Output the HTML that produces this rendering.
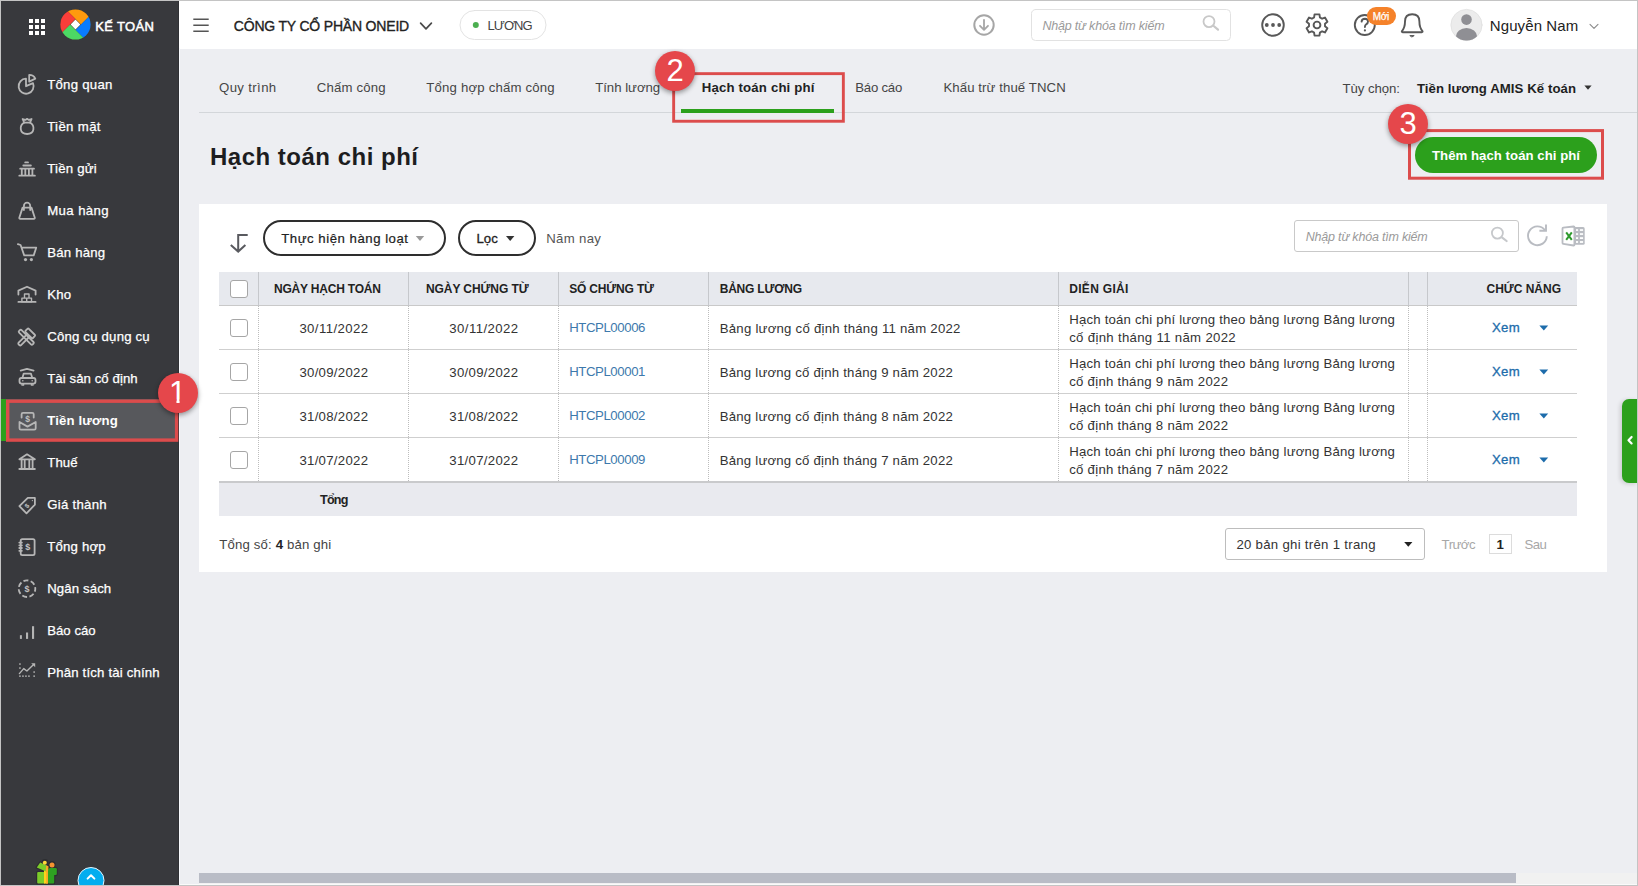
<!DOCTYPE html>
<html lang="vi">
<head>
<meta charset="utf-8">
<title>Hạch toán chi phí</title>
<style>
*{box-sizing:border-box;margin:0;padding:0}
html,body{width:1638px;height:886px;overflow:hidden}
body{position:relative;background:#edeef2;font-family:"Liberation Sans",sans-serif;font-size:13px;color:#212121}
.abs{position:absolute}
.t{position:absolute;white-space:nowrap;line-height:20px;height:20px}
#frame{position:absolute;left:0;top:0;width:1638px;height:886px;border:1px solid #c4c4c4;z-index:50;pointer-events:none}
#side{position:absolute;left:1px;top:1px;width:178px;height:884px;background:#38393d}
#top{position:absolute;left:179px;top:1px;width:1458px;height:47.5px;background:#fff}
.badge{position:absolute;width:40px;height:40px;border-radius:50%;background:#e5474b;color:#fff;font-size:31px;line-height:39px;text-align:center;box-shadow:0 2px 5px rgba(0,0,0,.4);z-index:20}
.rbox{position:absolute;border:2px solid #e04a4a;z-index:19}
#card{position:absolute;left:199px;top:204px;width:1408px;height:368px;background:#fff}
.pill{position:absolute;border:2px solid #2e2e2e;border-radius:18px;background:#fff}
.th{position:absolute;top:272px;height:34px;background:#e7e9ee;border-right:1px solid #c8c8c8;border-bottom:1px solid #c8c8c8}
.hl{position:absolute;left:219px;width:1358px;height:1px;background:#cfcfcf}
.vl{position:absolute;top:306px;width:0;height:175px;border-left:1px dotted #bdbdbd}
.cb{position:absolute;left:230px;width:18px;height:18px;border:1px solid #a6a6a6;border-radius:3px;background:#fff}
svg{overflow:visible}
</style>
</head>
<body>
<div id="side"></div>
<div class="abs" style="left:1px;top:399px;width:178px;height:42px;background:#57585c"></div>
<div class="abs" style="left:1px;top:399px;width:5px;height:42px;background:#2ca01c"></div>
<svg class="abs" style="left:0;top:0" width="180" height="50"><rect x="29" y="19" width="4" height="4" fill="#fff"/><rect x="35" y="19" width="4" height="4" fill="#fff"/><rect x="41" y="19" width="4" height="4" fill="#fff"/><rect x="29" y="25" width="4" height="4" fill="#fff"/><rect x="35" y="25" width="4" height="4" fill="#fff"/><rect x="41" y="25" width="4" height="4" fill="#fff"/><rect x="29" y="31" width="4" height="4" fill="#fff"/><rect x="35" y="31" width="4" height="4" fill="#fff"/><rect x="41" y="31" width="4" height="4" fill="#fff"/></svg>
<svg class="abs" style="left:59.8px;top:9.4px" width="31" height="31" viewBox="-15.5 -15.5 31 31">
<defs><clipPath id="lc"><circle r="15.1"/></clipPath></defs>
<g clip-path="url(#lc)">
<rect x="-16" y="-16" width="32" height="32" fill="#4a3a22"/>
<polygon points="5.5,0 -24.5,-30 35.5,-30" fill="#ff9a0e"/>
<polygon points="0,5.5 30,-24.5 30,35.5" fill="#0a7cff"/>
<polygon points="-5.5,0 24.5,30 -35.5,30" fill="#4cd964"/>
<polygon points="0,-5.5 -30,24.5 -30,-35.5" fill="#fa3e3a"/>
<polygon points="0,-4.9 4.9,0 0,4.9 -4.9,0" fill="#fff"/>
</g></svg>
<div class="t" style="left:95.3px;top:17px;font-size:13px;color:#fff;-webkit-text-stroke:0.5px #fff;letter-spacing:0.348px;">KẾ TOÁN</div>
<div class="t" style="left:47.2px;top:75px;font-size:13.2px;color:#fff;-webkit-text-stroke:0.25px #fff;letter-spacing:0.267px;">Tổng quan</div>
<div class="t" style="left:47.2px;top:117px;font-size:13.2px;color:#fff;-webkit-text-stroke:0.25px #fff;letter-spacing:0.355px;">Tiền mặt</div>
<div class="t" style="left:47.2px;top:159px;font-size:13.2px;color:#fff;-webkit-text-stroke:0.25px #fff;letter-spacing:0.225px;">Tiền gửi</div>
<div class="t" style="left:47.2px;top:201px;font-size:13.2px;color:#fff;-webkit-text-stroke:0.25px #fff;letter-spacing:0.406px;">Mua hàng</div>
<div class="t" style="left:47.2px;top:243px;font-size:13.2px;color:#fff;-webkit-text-stroke:0.25px #fff;letter-spacing:0.219px;">Bán hàng</div>
<div class="t" style="left:47.2px;top:285px;font-size:13.2px;color:#fff;-webkit-text-stroke:0.25px #fff;letter-spacing:0.266px;">Kho</div>
<div class="t" style="left:47.2px;top:327px;font-size:13.2px;color:#fff;-webkit-text-stroke:0.25px #fff;letter-spacing:0.199px;">Công cụ dụng cụ</div>
<div class="t" style="left:47.2px;top:369px;font-size:13.2px;color:#fff;-webkit-text-stroke:0.25px #fff;letter-spacing:0.076px;">Tài sản cố định</div>
<div class="t" style="left:47.2px;top:411px;font-size:13.2px;color:#fff;font-weight:bold;letter-spacing:0.141px;">Tiền lương</div>
<div class="t" style="left:47.2px;top:453px;font-size:13.2px;color:#fff;-webkit-text-stroke:0.25px #fff;letter-spacing:0.146px;">Thuế</div>
<div class="t" style="left:47.2px;top:495px;font-size:13.2px;color:#fff;-webkit-text-stroke:0.25px #fff;letter-spacing:0.289px;">Giá thành</div>
<div class="t" style="left:47.2px;top:537px;font-size:13.2px;color:#fff;-webkit-text-stroke:0.25px #fff;letter-spacing:0.208px;">Tổng hợp</div>
<div class="t" style="left:47.2px;top:579px;font-size:13.2px;color:#fff;-webkit-text-stroke:0.25px #fff;letter-spacing:0.119px;">Ngân sách</div>
<div class="t" style="left:47.2px;top:621px;font-size:13.2px;color:#fff;-webkit-text-stroke:0.25px #fff;letter-spacing:0.016px;">Báo cáo</div>
<div class="t" style="left:47.2px;top:663px;font-size:13.2px;color:#fff;-webkit-text-stroke:0.25px #fff;letter-spacing:0.181px;">Phân tích tài chính</div>
<svg class="abs" style="left:0;top:0" width="180" height="886" fill="none" stroke="#b6b6b6" stroke-width="1.8" stroke-linecap="round" stroke-linejoin="round">
<!-- 1 pie -->
<path d="M26 78.7 A7.5 7.5 0 1 0 33 83.2 L26 86.2 Z"/>
<path d="M29.2 81.6 V74.9 A6.8 6.8 0 0 1 35.3 78.6 Z"/>
<!-- 2 money bag -->
<path d="M24.2 122.6 C19.2 125.6 19.2 134 27.1 134 C35 134 35 125.6 30 122.6 Z"/>
<path d="M24.2 122.6 L22.6 119 L25.4 119.9 L27.1 118.8 L28.8 119.9 L31.6 119 L30 122.6"/>
<!-- 3 bank -->
<path d="M25.2 162.4 H28 M23.3 165.5 H30.9 M20.2 168.7 H34 M19.3 175.7 H34.9 M21.8 169 V175.3 M25.3 169 V175.3 M28.9 169 V175.3 M32.4 169 V175.3"/>
<!-- 4 bag -->
<path d="M22.6 207.6 H31.5 L34.8 217.8 Q35 218.8 34 218.8 H20.1 Q19.1 218.8 19.3 217.8 Z"/>
<path d="M23.9 210 V206 A3.15 3.3 0 0 1 30.2 206 V210"/>
<!-- 5 cart -->
<path d="M17.9 244.1 L20.6 245 L24.2 255.4 H33.7 L36.2 247.7 H21.7"/>
<circle cx="25.5" cy="259.6" r="1.6" fill="#b6b6b6" stroke="none"/><circle cx="31.4" cy="259.6" r="1.6" fill="#b6b6b6" stroke="none"/>
<!-- 6 warehouse -->
<path d="M18.4 294.6 V290.6 L27 286.7 L35.6 290.6 V294.6 M18.4 301.9 H35.6"/>
<path d="M24.5 294 H29 V298.1 H24.5 Z M21.9 298.1 H26.7 V301.9 H21.9 Z M26.7 298.1 H31.5 V301.9 H26.7 Z" stroke-width="1.4"/>
<!-- 7 tools -->
<rect x="-1.75" y="-9.6" width="3.5" height="19.2" rx="1.2" transform="translate(26.3 337.3) rotate(-45)"/>
<rect x="-1.75" y="-6.2" width="3.5" height="12.4" rx="1.2" transform="translate(23.4 340.3) rotate(45)"/>
<rect x="-2.3" y="-5.2" width="4.6" height="10.4" rx="1" transform="translate(30.2 333.4) rotate(-45)"/>
<!-- 8 car -->
<path d="M20.7 370.6 L27 368.8 L33.6 370.6"/>
<path d="M22.4 378 L23.7 373.6 H30.9 L32.3 378"/>
<rect x="19.5" y="378" width="16" height="5.6" rx="2"/>
<path d="M22 383.8 V385.2 H23.6 V383.8 M31.4 383.8 V385.2 H33 V383.8" stroke-width="1.3"/>
<circle cx="22.8" cy="380.8" r=".8" fill="#b4b4b4" stroke="none"/><circle cx="32.2" cy="380.8" r=".8" fill="#b4b4b4" stroke="none"/>
<!-- 9 salary -->
<path d="M19.5 422 L27.5 426.6 L35.7 422 V428.2 Q35.7 429.6 34.3 429.6 H20.9 Q19.5 429.6 19.5 428.2 Z"/>
<path d="M21.6 417.6 V414.2 Q21.6 412.8 23 412.8 H32.3 Q33.7 412.8 33.7 414.2 V417.6"/>
<text x="27.6" y="422.3" font-family="Liberation Sans, sans-serif" font-size="8.5" text-anchor="middle" font-weight="bold" fill="#c2c2c2" stroke="none">$</text>
<!-- 10 tax bank -->
<path d="M19.4 459.3 L27 454.3 L34.9 459.3 Z M19.3 469 H34.9 M21.6 460 V468.3 M24.7 460 V468.3 M29.3 460 V468.3 M32.6 460 V468.3"/>
<!-- 11 tag -->
<path d="M19.4 506.1 L27.8 497.9 H34.9 V504.7 L26.5 513.3 Z"/>
<circle cx="32.4" cy="500.6" r=".7" fill="#b4b4b4" stroke="none"/>
<text x="0" y="2.4" transform="translate(26.8 505.8) rotate(-45)" font-family="Liberation Sans, sans-serif" font-size="6.5" text-anchor="middle" font-weight="bold" fill="#c2c2c2" stroke="none">$</text>
<!-- 12 notebook -->
<rect x="20.7" y="539.1" width="13.9" height="16.1" rx="1.6"/>
<path d="M19.3 542.6 H21.9 M19.3 545.3 H21.9 M19.3 548 H21.9 M19.3 550.8 H21.9"/>
<text x="27.7" y="550.4" font-family="Liberation Sans, sans-serif" font-size="9" text-anchor="middle" font-weight="bold" fill="#c2c2c2" stroke="none">$</text>
<!-- 13 budget -->
<circle cx="27" cy="588.7" r="8.3" stroke-dasharray="5 2.45" stroke-dashoffset="2" stroke-linecap="butt"/>
<text x="27" y="592" font-family="Liberation Sans, sans-serif" font-size="9" text-anchor="middle" font-weight="bold" fill="#c2c2c2" stroke="none">$</text>
<!-- 14 bars -->
<g fill="#b4b4b4" stroke="none"><rect x="19.9" y="635.2" width="2" height="3.7"/><rect x="26" y="632.5" width="2.1" height="6.4"/><rect x="32" y="626.2" width="2.1" height="12.7"/></g>
<!-- 15 trend -->
<g fill="#b4b4b4" stroke="none">
<rect x="19.2" y="663.3" width="1.5" height="1.5"/><rect x="19.2" y="667.3" width="1.5" height="1.5"/>
<rect x="19.2" y="675.4" width="1.5" height="1.5"/><rect x="22.2" y="675.4" width="1.5" height="1.5"/><rect x="25.2" y="675.4" width="1.5" height="1.5"/><rect x="28.2" y="675.4" width="1.5" height="1.5"/><rect x="33.4" y="675.4" width="1.5" height="1.5"/>
<rect x="33.4" y="671.3" width="1.5" height="1.5"/>
<polygon points="31.2,663.2 35.2,663.2 35.2,667.2"/>
</g>
<path d="M19.4 673.6 L23.7 668.6 L26.9 671 L33.6 664.6" stroke-width="1.4"/>
</svg>

<svg class="abs" style="left:0;top:850px" width="180" height="36" viewBox="0 850 180 36">
<g stroke="#2d2e31" stroke-width="2.4" stroke-linejoin="round" fill="#2d2e31">
<rect x="37.2" y="872" width="16.8" height="11.4" rx="1"/>
<polygon points="36.8,867.5 40.2,862.6 50.6,867.2 47.6,872.4"/>
<rect x="49" y="868" width="7.6" height="7" rx="1"/>
<circle cx="45" cy="862.4" r="2.1"/><circle cx="52" cy="864.8" r="2.5"/>
</g>
<rect x="37.2" y="872" width="8" height="11.6" rx="1" fill="#7bcc2a"/>
<rect x="44" y="866" width="3.6" height="17.6" fill="#ffd31a"/>
<rect x="46.2" y="866" width="1.8" height="17.6" fill="#f9a825"/>
<rect x="48" y="868.5" width="6.2" height="15.1" rx="1" fill="#2ea121"/>
<rect x="49" y="868" width="7.8" height="7" rx="1.2" fill="#2ea121"/>
<polygon points="36.8,867.5 40.2,862.6 47.6,865.9 46.6,871.8" fill="#7bcc2a"/>
<polygon points="46.2,865.3 48.6,866.4 47.8,872.4 45.6,871.4" fill="#f9a825"/>
<circle cx="44.8" cy="862.8" r="2" fill="#ffd83a"/>
<circle cx="52" cy="865" r="2.5" fill="#f59331"/>
<circle cx="91" cy="880.5" r="13" fill="#03adef" stroke="#e6f7ff" stroke-width="1"/>
<path d="M87.6 878.6 L91 875.2 L94.4 878.6" fill="none" stroke="#fff" stroke-width="2" stroke-linecap="round" stroke-linejoin="round"/>
</svg>
<div id="top"></div>
<div class="abs" style="left:179px;top:48px;width:1px;height:837px;background:#f8f9fd"></div>
<div class="abs" style="left:178px;top:1px;width:1px;height:884px;background:#303135"></div>
<svg class="abs" style="left:0;top:0" width="1638" height="50" fill="none" stroke-linecap="round" stroke-linejoin="round">
<path d="M193.3 19.3 H208.7 M193.3 25.3 H208.7 M193.3 31.3 H208.7" stroke="#555" stroke-width="1.6" stroke-linecap="butt"/>
<path d="M420.6 23.2 L426 28.8 L431.4 23.2" stroke="#4a4a4a" stroke-width="1.7"/>
<rect x="460" y="10.5" width="86" height="29" rx="14.5" fill="#fff" stroke="#e3e3e3" stroke-width="1"/>
<circle cx="475.8" cy="25" r="3" fill="#4caf50"/>
<!-- download -->
<circle cx="984" cy="25" r="9.7" stroke="#a6a6a6" stroke-width="2"/>
<path d="M984 19.8 V29.4 M980 25.8 L984 29.8 L988 25.8" stroke="#a6a6a6" stroke-width="1.8"/>
<!-- search -->
<rect x="1031.5" y="9.5" width="199" height="31" rx="4" fill="#fff" stroke="#e2e2e2"/>
<circle cx="1209" cy="21.6" r="5.5" stroke="#c8c8c8" stroke-width="1.8"/>
<path d="M1213.7 26 L1218 29.7" stroke="#c8c8c8" stroke-width="2.2"/>
<!-- ellipsis -->
<circle cx="1273" cy="25" r="10.8" stroke="#585858" stroke-width="1.9"/>
<circle cx="1266.8" cy="25" r="1.9" fill="#585858"/><circle cx="1273" cy="25" r="1.9" fill="#585858"/><circle cx="1279.2" cy="25" r="1.9" fill="#585858"/>
<!-- gear -->
<g transform="translate(1317 25)" stroke="#585858" stroke-width="1.9">
<path d="M2.90 -7.56 L2.45 -10.62 L-2.45 -10.62 L-2.90 -7.56 L-5.10 -6.29 L-7.97 -7.43 L-10.42 -3.19 L-8.00 -1.27 L-8.00 1.27 L-10.42 3.19 L-7.97 7.43 L-5.10 6.29 L-2.90 7.56 L-2.45 10.62 L2.45 10.62 L2.90 7.56 L5.10 6.29 L7.97 7.43 L10.42 3.19 L8.00 1.27 L8.00 -1.27 L10.42 -3.19 L7.97 -7.43 L5.10 -6.29 Z"/>
<circle r="3.4"/>
</g>
<!-- help -->
<circle cx="1364.8" cy="25" r="10" stroke="#585858" stroke-width="1.9"/>
<path d="M1361.6 21.6 Q1361.8 18.8 1364.9 18.8 Q1368 18.9 1368 21.5 Q1368 23.3 1366.2 24.3 Q1364.9 25.1 1364.9 27" stroke="#585858" stroke-width="1.9"/>
<circle cx="1364.9" cy="30.4" r="1.1" fill="#5a5a5a"/>
<rect x="1367" y="7" width="29" height="18" rx="9" fill="#f5822a"/>
<!-- bell -->
<path d="M1402.6 32.2 Q1401.4 32.2 1402 31 Q1405 27.5 1405 21.5 Q1405 14.3 1412.2 14.3 Q1419.4 14.3 1419.4 21.5 Q1419.4 27.5 1422.4 31 Q1423 32.2 1421.8 32.2 Z" stroke="#585858" stroke-width="1.9"/>
<path d="M1410.2 35.6 H1414.2 L1412.2 36.8 Z" fill="#5a5a5a" stroke="#5a5a5a" stroke-width="1"/>
<!-- avatar -->
<circle cx="1466.5" cy="25" r="15.6" fill="#ececec" stroke="#e0e0e0" stroke-width=".8"/>
<clipPath id="avc"><circle cx="1466.5" cy="25" r="15.4"/></clipPath>
<g clip-path="url(#avc)" fill="#8f8f94"><circle cx="1466.5" cy="19.6" r="5.3"/><ellipse cx="1466.5" cy="36.5" rx="10.6" ry="8.6"/></g>
<path d="M1590 24.4 L1594 28.4 L1598 24.4" stroke="#8a8a8a" stroke-width="1.1"/>
</svg>
<div class="t" style="left:233.8px;top:16px;font-size:14px;color:#222;-webkit-text-stroke:0.35px #222;letter-spacing:-0.189px;">CÔNG TY CỔ PHẦN ONEID</div>
<div class="t" style="left:487.4px;top:16px;font-size:13px;color:#444;letter-spacing:-0.921px;">LƯƠNG</div>
<div class="t" style="left:1042.4px;top:16px;font-size:12.5px;color:#9a9a9a;font-style:italic;letter-spacing:-0.192px;">Nhập từ khóa tìm kiếm</div>
<div class="t" style="left:1372.8px;top:7px;font-size:10px;color:#fff;-webkit-text-stroke:0.25px #fff;letter-spacing:-0.355px;">Mới</div>
<div class="t" style="left:1489.8px;top:16px;font-size:15px;color:#222;letter-spacing:0.095px;">Nguyễn Nam</div>
<div class="abs" style="left:199px;top:112px;width:1438px;height:1px;background:#d3d6da"></div>
<div class="abs" style="left:681px;top:109px;width:153px;height:4px;background:#2ca01c"></div>
<div class="t" style="left:219px;top:78px;font-size:13.2px;color:#454545;letter-spacing:0.369px;">Quy trình</div>
<div class="t" style="left:316.8px;top:78px;font-size:13.2px;color:#454545;letter-spacing:0.181px;">Chấm công</div>
<div class="t" style="left:426.3px;top:78px;font-size:13.2px;color:#454545;letter-spacing:0.181px;">Tổng hợp chấm công</div>
<div class="t" style="left:595.2px;top:78px;font-size:13.2px;color:#454545;letter-spacing:-0.016px;">Tính lương</div>
<div class="t" style="left:855.2px;top:78px;font-size:13.2px;color:#454545;letter-spacing:-0.218px;">Báo cáo</div>
<div class="t" style="left:943.4px;top:78px;font-size:13.2px;color:#454545;letter-spacing:0.092px;">Khấu trừ thuế TNCN</div>
<div class="t" style="left:701.8px;top:78px;font-size:13.2px;color:#222;font-weight:bold;letter-spacing:0.168px;">Hạch toán chi phí</div>
<div class="t" style="left:1342.5px;top:79px;font-size:13.2px;color:#444;letter-spacing:-0.065px;">Tùy chọn:</div>
<div class="t" style="left:1416.9px;top:79px;font-size:13.2px;color:#1f1f1f;font-weight:bold;letter-spacing:0.077px;">Tiền lương AMIS Kế toán</div>
<svg class="abs" style="left:1584px;top:85px" width="9" height="6"><polygon points="0.4,0.5 7.6,0.5 4,4.8" fill="#333"/></svg>
<div class="t" style="left:210px;top:147px;font-size:24px;color:#1d1d1f;font-weight:bold;letter-spacing:0.499px;">Hạch toán chi phí</div>
<div class="abs" style="left:1415px;top:137px;width:182px;height:36px;border-radius:18px;background:#2ca01c"></div>
<div class="t" style="left:1432px;top:146px;font-size:13.2px;color:#fff;font-weight:bold;letter-spacing:0.034px;">Thêm hạch toán chi phí</div>
<div id="card"></div>
<div class="pill" style="left:263px;top:220px;width:183px;height:36px"></div>
<div class="pill" style="left:458px;top:220px;width:78px;height:36px"></div>
<div class="abs" style="left:1294px;top:220px;width:225px;height:32px;border:1px solid #c9c9c9;border-radius:3px;background:transparent"></div>
<svg class="abs" style="left:0;top:200px" width="1638" height="70" viewBox="0 200 1638 70" fill="none" stroke-linecap="round" stroke-linejoin="round">
<path d="M238.2 251 V235 H247.7 M230.8 245 L238.2 251.6 L245.4 245" stroke="#595a5f" stroke-width="2" stroke-linecap="butt" stroke-linejoin="miter"/>
<polygon points="415.8,236 424.2,236 420,241" fill="#9a9a9a"/>
<polygon points="506,236 514.4,236 510.2,241" fill="#333"/>
<circle cx="1497.4" cy="233.1" r="5.5" stroke="#c6c8cb" stroke-width="1.8"/>
<path d="M1502.2 237.6 L1506.6 241" stroke="#c6c8cb" stroke-width="2.2"/>
<path d="M1544.8 230 A9.4 9.4 0 1 0 1546.8 236.3" stroke="#b9bcc2" stroke-width="1.9" stroke-linecap="butt"/>
<path d="M1546 224.6 V230.8 H1539.4" stroke="#b9bcc2" stroke-width="1.9" stroke-linecap="butt" stroke-linejoin="miter"/>
<!-- excel -->
<rect x="1573.6" y="227.1" width="11.1" height="17.7" rx="1.6" fill="#b9bcc2"/>
<rect x="1576" y="229.2" width="2.1" height="1.7" fill="#fff"/><rect x="1579.9" y="229.2" width="3.2" height="1.7" fill="#fff"/><rect x="1576" y="233.2" width="2.1" height="1.7" fill="#fff"/><rect x="1579.9" y="233.2" width="3.2" height="1.7" fill="#fff"/><rect x="1576" y="237.2" width="2.1" height="1.8" fill="#fff"/><rect x="1579.9" y="237.2" width="3.2" height="1.8" fill="#fff"/><rect x="1576" y="241.1" width="2.1" height="1.8" fill="#fff"/><rect x="1579.9" y="241.1" width="3.2" height="1.8" fill="#fff"/>
<path d="M1563.3 227.6 L1573.6 226.5 Q1574.4 226.4 1574.4 227.3 V244.7 Q1574.4 245.6 1573.6 245.5 L1563.3 243.8 Q1562.5 243.7 1562.5 242.9 V228.5 Q1562.5 227.7 1563.3 227.6 Z" fill="#fff" stroke="#b9bcc2" stroke-width="1.8"/>
<path d="M1566.2 232.4 L1571.8 239.8 M1571.8 232.4 L1566.2 239.8" stroke="#2e9a2e" stroke-width="2" stroke-linecap="butt"/>
</svg>
<div class="t" style="left:281.3px;top:229px;font-size:13.2px;color:#222;-webkit-text-stroke:0.2px #222;letter-spacing:0.520px;">Thực hiện hàng loạt</div>
<div class="t" style="left:476.4px;top:229px;font-size:13.2px;color:#222;-webkit-text-stroke:0.3px #222;letter-spacing:0.117px;">Lọc</div>
<div class="t" style="left:546.3px;top:229px;font-size:13.2px;color:#555;letter-spacing:0.303px;">Năm nay</div>
<div class="t" style="left:1305.8px;top:227px;font-size:12.5px;color:#9a9a9a;font-style:italic;letter-spacing:-0.207px;">Nhập từ khóa tìm kiếm</div>
<div class="abs" style="left:219px;top:272px;width:1358px;height:34px;background:#e7e9ee;border-bottom:1px solid #c9c9c9"></div>
<div class="abs" style="left:258px;top:272px;width:1px;height:34px;background:#c6c8cc"></div>
<div class="vl" style="left:258px"></div>
<div class="abs" style="left:408px;top:272px;width:1px;height:34px;background:#c6c8cc"></div>
<div class="vl" style="left:408px"></div>
<div class="abs" style="left:558px;top:272px;width:1px;height:34px;background:#c6c8cc"></div>
<div class="vl" style="left:558px"></div>
<div class="abs" style="left:708px;top:272px;width:1px;height:34px;background:#c6c8cc"></div>
<div class="vl" style="left:708px"></div>
<div class="abs" style="left:1058px;top:272px;width:1px;height:34px;background:#c6c8cc"></div>
<div class="vl" style="left:1058px"></div>
<div class="abs" style="left:1408px;top:272px;width:1px;height:34px;background:#c6c8cc"></div>
<div class="vl" style="left:1408px"></div>
<div class="abs" style="left:1427px;top:272px;width:1px;height:34px;background:#c6c8cc"></div>
<div class="vl" style="left:1427px"></div>
<div class="cb" style="top:280px"></div>
<div class="t" style="left:274px;top:279px;font-size:12px;color:#222;font-weight:bold;letter-spacing:-0.198px;">NGÀY HẠCH TOÁN</div>
<div class="t" style="left:426px;top:279px;font-size:12px;color:#222;font-weight:bold;letter-spacing:-0.092px;">NGÀY CHỨNG TỪ</div>
<div class="t" style="left:569.2px;top:279px;font-size:12px;color:#222;font-weight:bold;letter-spacing:-0.178px;">SỐ CHỨNG TỪ</div>
<div class="t" style="left:719.7px;top:279px;font-size:12px;color:#222;font-weight:bold;letter-spacing:-0.199px;">BẢNG LƯƠNG</div>
<div class="t" style="left:1069.2px;top:279px;font-size:12px;color:#222;font-weight:bold;letter-spacing:0.316px;">DIỄN GIẢI</div>
<div class="t" style="left:1486.5px;top:279px;font-size:12px;color:#222;font-weight:bold;letter-spacing:-0.016px;">CHỨC NĂNG</div>
<div class="hl" style="top:349px"></div>
<div class="cb" style="top:319px"></div>
<div class="t" style="left:299.4px;top:319px;font-size:13.2px;color:#333;letter-spacing:0.397px;">30/11/2022</div>
<div class="t" style="left:449.3px;top:319px;font-size:13.2px;color:#333;letter-spacing:0.419px;">30/11/2022</div>
<div class="t" style="left:569.2px;top:318px;font-size:13.2px;color:#3d79ac;letter-spacing:-0.412px;">HTCPL00006</div>
<div class="t" style="left:719.7px;top:319px;font-size:13.2px;color:#333;letter-spacing:0.247px;">Bảng lương cố định tháng 11 năm 2022</div>
<div class="t" style="left:1069.2px;top:310px;font-size:13.2px;color:#333;letter-spacing:0.205px;">Hạch toán chi phí lương theo bảng lương Bảng lương</div>
<div class="t" style="left:1069.2px;top:328px;font-size:13.2px;color:#333;letter-spacing:0.318px;">cố định tháng 11 năm 2022</div>
<div class="t" style="left:1492px;top:318px;font-size:13.2px;color:#1d6cab;-webkit-text-stroke:0.3px #1d6cab;letter-spacing:0.287px;">Xem</div>
<div class="hl" style="top:393px"></div>
<div class="cb" style="top:363px"></div>
<div class="t" style="left:299.4px;top:363px;font-size:13.2px;color:#333;letter-spacing:0.287px;">30/09/2022</div>
<div class="t" style="left:449.3px;top:363px;font-size:13.2px;color:#333;letter-spacing:0.309px;">30/09/2022</div>
<div class="t" style="left:569.2px;top:362px;font-size:13.2px;color:#3d79ac;letter-spacing:-0.412px;">HTCPL00001</div>
<div class="t" style="left:719.7px;top:363px;font-size:13.2px;color:#333;letter-spacing:0.217px;">Bảng lương cố định tháng 9 năm 2022</div>
<div class="t" style="left:1069.2px;top:354px;font-size:13.2px;color:#333;letter-spacing:0.205px;">Hạch toán chi phí lương theo bảng lương Bảng lương</div>
<div class="t" style="left:1069.2px;top:372px;font-size:13.2px;color:#333;letter-spacing:0.273px;">cố định tháng 9 năm 2022</div>
<div class="t" style="left:1492px;top:362px;font-size:13.2px;color:#1d6cab;-webkit-text-stroke:0.3px #1d6cab;letter-spacing:0.287px;">Xem</div>
<div class="hl" style="top:437px"></div>
<div class="cb" style="top:407px"></div>
<div class="t" style="left:299.4px;top:407px;font-size:13.2px;color:#333;letter-spacing:0.287px;">31/08/2022</div>
<div class="t" style="left:449.3px;top:407px;font-size:13.2px;color:#333;letter-spacing:0.309px;">31/08/2022</div>
<div class="t" style="left:569.2px;top:406px;font-size:13.2px;color:#3d79ac;letter-spacing:-0.412px;">HTCPL00002</div>
<div class="t" style="left:719.7px;top:407px;font-size:13.2px;color:#333;letter-spacing:0.217px;">Bảng lương cố định tháng 8 năm 2022</div>
<div class="t" style="left:1069.2px;top:398px;font-size:13.2px;color:#333;letter-spacing:0.205px;">Hạch toán chi phí lương theo bảng lương Bảng lương</div>
<div class="t" style="left:1069.2px;top:416px;font-size:13.2px;color:#333;letter-spacing:0.273px;">cố định tháng 8 năm 2022</div>
<div class="t" style="left:1492px;top:406px;font-size:13.2px;color:#1d6cab;-webkit-text-stroke:0.3px #1d6cab;letter-spacing:0.287px;">Xem</div>
<div class="cb" style="top:451px"></div>
<div class="t" style="left:299.4px;top:451px;font-size:13.2px;color:#333;letter-spacing:0.287px;">31/07/2022</div>
<div class="t" style="left:449.3px;top:451px;font-size:13.2px;color:#333;letter-spacing:0.309px;">31/07/2022</div>
<div class="t" style="left:569.2px;top:450px;font-size:13.2px;color:#3d79ac;letter-spacing:-0.412px;">HTCPL00009</div>
<div class="t" style="left:719.7px;top:451px;font-size:13.2px;color:#333;letter-spacing:0.217px;">Bảng lương cố định tháng 7 năm 2022</div>
<div class="t" style="left:1069.2px;top:442px;font-size:13.2px;color:#333;letter-spacing:0.205px;">Hạch toán chi phí lương theo bảng lương Bảng lương</div>
<div class="t" style="left:1069.2px;top:460px;font-size:13.2px;color:#333;letter-spacing:0.273px;">cố định tháng 7 năm 2022</div>
<div class="t" style="left:1492px;top:450px;font-size:13.2px;color:#1d6cab;-webkit-text-stroke:0.3px #1d6cab;letter-spacing:0.287px;">Xem</div>
<div class="abs" style="left:219px;top:481px;width:1358px;height:2px;background:#c9cacc"></div>
<div class="abs" style="left:219px;top:483px;width:1358px;height:33px;background:#e9eaef"></div>
<div class="t" style="left:320px;top:490px;font-size:12.6px;color:#222;font-weight:bold;letter-spacing:-0.794px;">Tổng</div>
<div class="t" style="left:219.3px;top:535px;font-size:13.2px;color:#444;letter-spacing:0.161px;">Tổng số: <b style="color:#222">4</b> bản ghi</div>
<div class="abs" style="left:1225px;top:528px;width:200px;height:32px;border:1px solid #bdbdbd;border-radius:3px;background:#fff"></div>
<svg class="abs" style="left:0;top:0" width="1638" height="600"><polygon points="1539.4,325.6 1548.2,325.6 1543.8,330.4" fill="#1d6cab"/><polygon points="1539.4,369.6 1548.2,369.6 1543.8,374.4" fill="#1d6cab"/><polygon points="1539.4,413.6 1548.2,413.6 1543.8,418.4" fill="#1d6cab"/><polygon points="1539.4,457.6 1548.2,457.6 1543.8,462.4" fill="#1d6cab"/><polygon points="1404.2,542 1412.4,542 1408.3,546.8" fill="#222"/></svg>
<div class="t" style="left:1236.4px;top:535px;font-size:13.2px;color:#333;letter-spacing:0.290px;">20 bản ghi trên 1 trang</div>
<div class="t" style="left:1441.6px;top:535px;font-size:13.2px;color:#a7a7a7;letter-spacing:-0.508px;">Trước</div>
<div class="abs" style="left:1489px;top:534px;width:23px;height:20px;border:1px solid #dcdcdc;background:#fff"></div>
<div class="t" style="left:1496.6px;top:535px;font-size:13.2px;color:#222;font-weight:bold;">1</div>
<div class="t" style="left:1524.5px;top:535px;font-size:13.2px;color:#a7a7a7;letter-spacing:-0.584px;">Sau</div>
<div class="abs" style="left:1622px;top:399px;width:16px;height:84px;background:#2ca01c;border-radius:7px 0 0 7px;box-shadow:-2px 1px 4px rgba(0,0,0,.14)"></div>
<svg class="abs" style="left:1625px;top:434px" width="10" height="12"><path d="M6.6 3 L3.5 6.2 L6.6 9.4" fill="none" stroke="#fff" stroke-width="2.2" stroke-linecap="round" stroke-linejoin="round"/></svg>
<div class="abs" style="left:199px;top:873px;width:1438px;height:11px;background:#f1f1f1"></div>
<div class="abs" style="left:179px;top:884px;width:1458px;height:1px;background:#fafafa"></div>
<div class="abs" style="left:199px;top:873px;width:1317px;height:10px;background:#b9bcc6"></div>
<svg class="abs" style="left:0;top:0;z-index:19" width="1638" height="460" fill="none" stroke="#dc4c4c">
<rect x="7.7" y="401.2" width="168.9" height="38.9" stroke-width="3.4"/>
<rect x="673.65" y="73.65" width="169.7" height="47.6" stroke-width="2.9"/>
<rect x="1409.5" y="130.6" width="193" height="47.6" stroke-width="3"/>
</svg>
<div class="badge" style="left:158px;top:373px"><span style="display:inline-block;margin-left:-1px;clip-path:polygon(0 0,100% 0,100% 68%,62% 68%,62% 100%,44% 100%,44% 68%,0 68%)">1</span></div>
<div class="badge" style="left:655px;top:51px">2</div>
<div class="badge" style="left:1388px;top:104px">3</div>
<div id="frame"></div>
</body>
</html>
